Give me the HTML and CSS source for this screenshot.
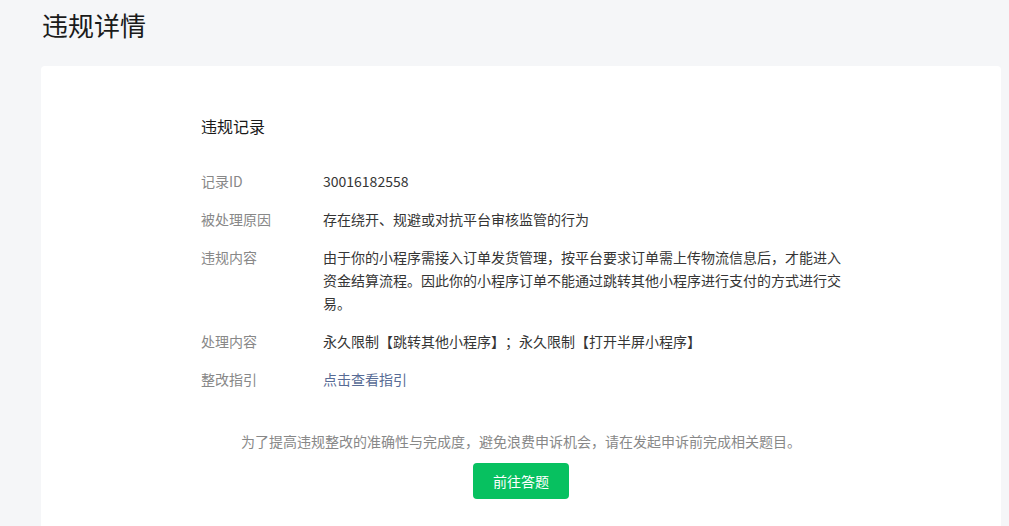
FILE: index.html
```html
<html>
<head>
    <meta charset="utf-8">
    <link rel="stylesheet" href="styles.css">
</head>
<body>
    <div class="page">
        <div class="page-header">
            <h1>违规详情</h1>
        </div>

        <div class="card">
            <h2 class="section-title">违规记录</h2>

            <div class="info-list">
                <div class="info-row">
                    <div class="info-label">记录ID</div>
                    <div class="info-value">30016182558</div>
                </div>
                <div class="info-row">
                    <div class="info-label">被处理原因</div>
                    <div class="info-value">存在绕开、规避或对抗平台审核监管的行为</div>
                </div>
                <div class="info-row">
                    <div class="info-label">违规内容</div>
                    <div class="info-value">由于你的小程序需接入订单发货管理，按平台要求订单需上传物流信息后，才能进入资金结算流程。因此你的小程序订单不能通过跳转其他小程序进行支付的方式进行交易。</div>
                </div>
                <div class="info-row">
                    <div class="info-label">处理内容</div>
                    <div class="info-value">永久限制【跳转其他小程序】；永久限制【打开半屏小程序】</div>
                </div>
                <div class="info-row">
                    <div class="info-label">整改指引</div>
                    <div class="info-value"><a class="link" href="#">点击查看指引</a></div>
                </div>
            </div>

            <div class="card-footer">
                <p class="tips">为了提高违规整改的准确性与完成度，避免浪费申诉机会，请在发起申诉前完成相关题目。</p>
                <button class="btn btn-primary">前往答题</button>
            </div>
        </div>
    </div>
</body>
</html>
```

FILE: styles.css
```css
body {
    margin: 0;
    background-color: #f5f6f8;
    color: #353535;
    font-family: "Noto Sans CJK SC", "Liberation Sans", sans-serif;
    font-size: 14px;
    text-spacing-trim: space-all;
}

.page {
    padding: 0 8px 0 41px;
}

.page-header {
    height: 66px;
    display: flex;
    align-items: flex-start;
}

.page-header h1 {
    margin: 6px 0 0 1px;
    font-size: 26px;
    font-weight: normal;
    line-height: 38px;
    color: #1a1a1a;
}

.card {
    background-color: #fff;
    border-radius: 4px;
    padding: 48px 160px 40px 160px;
    min-height: 480px;
    box-sizing: border-box;
}

.section-title {
    margin: 0 0 32px 0;
    font-size: 16px;
    font-weight: normal;
    line-height: 24px;
    color: #1a1a1a;
}

.info-row {
    display: flex;
    line-height: 23px;
    margin-bottom: 15px;
}

.info-label {
    width: 122px;
    flex-shrink: 0;
    color: #888;
}

.info-value {
    width: 522px;
    color: #353535;
}

.link {
    color: #576b95;
    text-decoration: none;
}

.card-footer {
    display: flex;
    flex-direction: column;
    align-items: center;
    margin-left: -160px;
    margin-right: -160px;
    padding-top: 24px;
}

.tips {
    margin: 0 0 10px 0;
    line-height: 23px;
    color: #888;
}

.btn {
    width: 96px;
    height: 36px;
    border: none;
    border-radius: 4px;
    font-family: inherit;
    font-size: 14px;
    cursor: pointer;
}

.btn-primary {
    background-color: #07c160;
    color: #fff;
}
```
